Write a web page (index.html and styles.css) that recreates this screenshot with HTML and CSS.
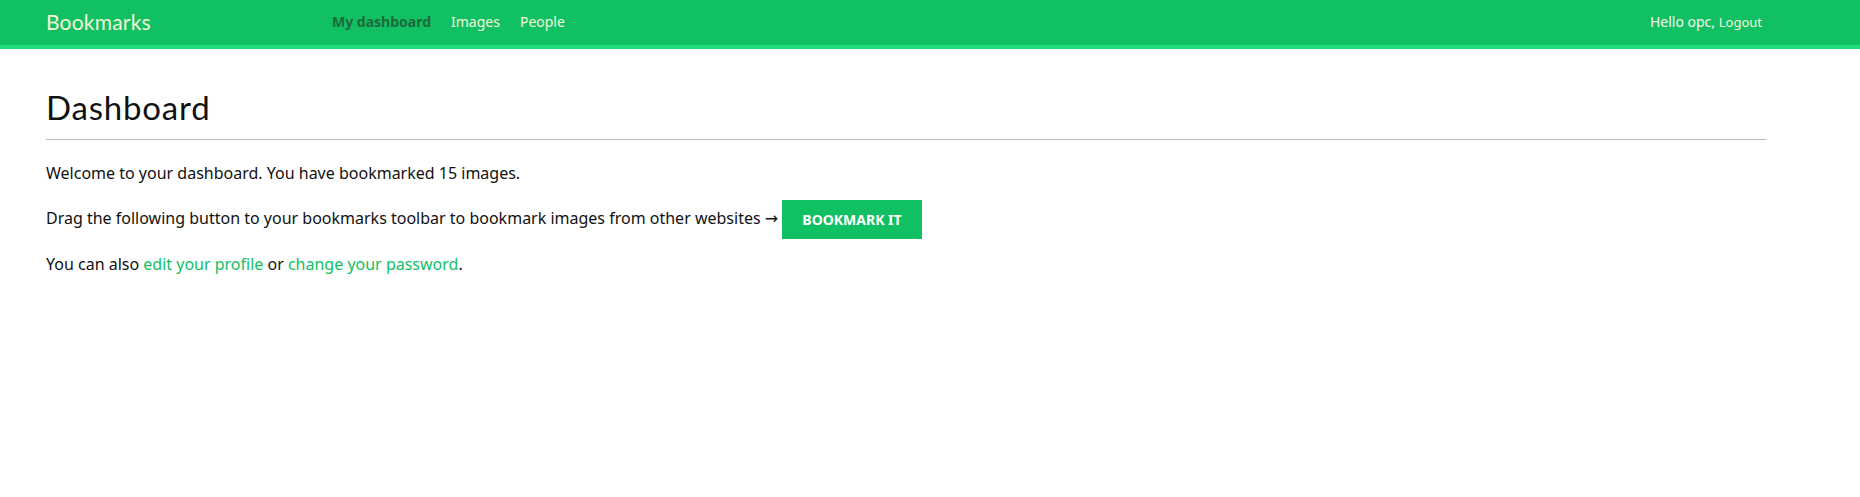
FILE: index.html
```html
<!DOCTYPE html>
<html lang="en">
<head>
<meta charset="utf-8">
<title>Dashboard</title>
<link rel="stylesheet" href="styles.css">
</head>
<body>
<header class="header">
  <span class="logo">Bookmarks</span>
  <ul class="menu">
    <li class="selected"><a href="#">My dashboard</a></li>
    <li><a href="#">Images</a></li>
    <li><a href="#">People</a></li>
  </ul>
  <span class="user">Hello opc, <a href="#">Logout</a></span>
</header>
<main class="content">
  <h1 class="title">Dashboard</h1>
  <p>Welcome to your dashboard. You have bookmarked 15 images.</p>
  <p>Drag the following button to your bookmarks toolbar to bookmark images from other websites <span class="arrow">→</span> <a href="#" class="button">Bookmark it</a></p>
  <p>You can also <a href="#">edit your profile</a> or <a href="#">change your password</a>.</p>
</main>
</body>
</html>
```
FILE: styles.css
```css
html, body {
  margin: 0;
  padding: 0;
}
body {
  font-family: "Noto Sans", "Open Sans", sans-serif;
  font-size: 16px;
  color: #111;
  background: #fff;
}
a {
  color: #12c064;
  text-decoration: none;
}
.header {
  display: flex;
  align-items: center;
  box-sizing: border-box;
  height: 49px;
  background: #12c064;
  border-bottom: 4px solid #1ede78;
  padding: 0 98px 3px 46px;
}
.logo {
  font-family: "Lato", sans-serif;
  font-size: 21px;
  letter-spacing: 0.2px;
  color: #f4f8d8;
  width: 286px;
}
.menu {
  display: flex;
  gap: 20px;
  list-style: none;
  margin: 0;
  padding: 0;
  font-size: 14px;
}
.menu a {
  color: #f4f8d8;
}
.menu .selected a {
  color: #1d6a3a;
  font-weight: bold;
}
.user {
  margin-left: auto;
  font-size: 14px;
  color: #f2f8f0;
}
.user a {
  font-size: 13px;
  color: #f4f8d8;
}
.content {
  padding: 0 94px 0 46px;
}
.title {
  font-family: "Lato", sans-serif;
  font-weight: 400;
  font-size: 33px;
  letter-spacing: 0.8px;
  margin: 38px 0 0;
  padding-bottom: 12px;
  border-bottom: 1px solid #bbb;
  line-height: 40px;
}
p {
  margin: 21px 0 0;
  line-height: 24px;
}
.arrow {
  font-family: "DejaVu Sans", sans-serif;
}
.button {
  display: inline-block;
  background: #12c064;
  color: #fff;
  font-weight: bold;
  font-size: 14px;
  text-transform: uppercase;
  padding: 0 20px;
  line-height: 39px;
  margin: -8px 0;
  vertical-align: middle;
}
```
